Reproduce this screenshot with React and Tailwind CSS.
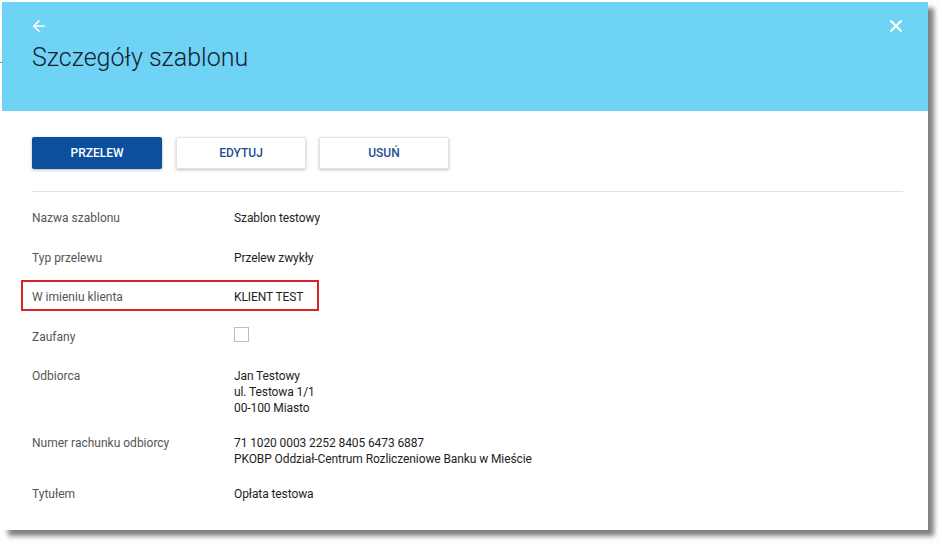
import { ArrowLeft, X } from "lucide-react";

const rows = [
  { label: "Nazwa szablonu", value: ["Szablon testowy"], gap: "mt-[18px]" },
  { label: "Typ przelewu", value: ["Przelew zwykły"], gap: "mt-[24px]" },
  { label: "W imieniu klienta", value: ["KLIENT TEST"], gap: "mt-[23px]", marked: true },
  { label: "Zaufany", checkbox: true, gap: "mt-[24px]" },
  { label: "Odbiorca", value: ["Jan Testowy", "ul. Testowa 1/1", "00-100 Miasto"], gap: "mt-[23px]" },
  {
    label: "Numer rachunku odbiorcy",
    value: ["71 1020 0003 2252 8405 6473 6887", "PKOBP Oddział-Centrum Rozliczeniowe Banku w Mieście"],
    gap: "mt-[19px]",
  },
  { label: "Tytułem", value: ["Opłata testowa"], gap: "mt-[19px]" },
];

function Row({ row }) {
  return (
    <div className={`relative flex text-[12px] leading-[16px] ${row.gap}`}>
      {row.marked && (
        <div className="absolute left-[-11px] top-[-9px] w-[298px] h-[31px] border-2 border-[#d8232a]" />
      )}
      <div className="w-[202px] shrink-0 text-[#555]">{row.label}</div>
      <div className="text-[#1e1e1e] tracking-[-0.1px]">
        {row.checkbox ? (
          <div className="w-[15px] h-[15px] mt-[-2px] border border-[#bdbdbd] bg-white" />
        ) : (
          row.value.map((line) => <div key={line}>{line}</div>)
        )}
      </div>
    </div>
  );
}

export default function App() {
  return (
    <div className="w-[942px] h-[544px] bg-white relative font-['Roboto','Liberation_Sans',sans-serif]">
      <div className="absolute left-0 top-[62px] w-[3px] h-[1px] bg-[#9a9a9a]" />
      <div className="ml-[2px] pt-[2px]">
        <div className="w-[926px] h-[528px] bg-white shadow-[6px_6px_5px_rgba(0,0,0,0.5)]">
          <div className="h-[109px] bg-[#6fd3f5] pl-[28px] pr-[22px]">
            <div className="flex justify-between items-center h-[18px] pt-[15px] box-content">
              <ArrowLeft className="w-[18px] h-[18px] text-white" strokeWidth={2} />
              <X className="w-[20px] h-[20px] text-white" strokeWidth={2.5} />
            </div>
            <h1 className="mt-[7px] ml-[2px] text-[25px] leading-[32px] font-light text-[#14212e]">
              Szczegóły szablonu
            </h1>
          </div>

          <div className="pl-[30px] pr-[25px]">
            <div className="flex gap-[13px] mt-[26px]">
              <button className="w-[130px] h-[32px] bg-[#0c4f9c] text-white text-[12px] font-medium rounded-[2px] shadow-[0_1px_3px_rgba(0,0,0,0.3)]">
                PRZELEW
              </button>
              <button className="w-[130px] h-[32px] ml-[1px] bg-white text-[#1f4f8f] text-[12px] font-medium rounded-[2px] border border-[#e4e4e4] shadow-[0_1px_3px_rgba(0,0,0,0.25)]">
                EDYTUJ
              </button>
              <button className="w-[130px] h-[32px] bg-white text-[#1f4f8f] text-[12px] font-medium rounded-[2px] border border-[#e4e4e4] shadow-[0_1px_3px_rgba(0,0,0,0.25)]">
                USUŃ
              </button>
            </div>
            <div className="mt-[22px] h-px bg-[#e2e2e2]" />
            {rows.map((row) => (
              <Row key={row.label} row={row} />
            ))}
          </div>
        </div>
      </div>
    </div>
  );
}
